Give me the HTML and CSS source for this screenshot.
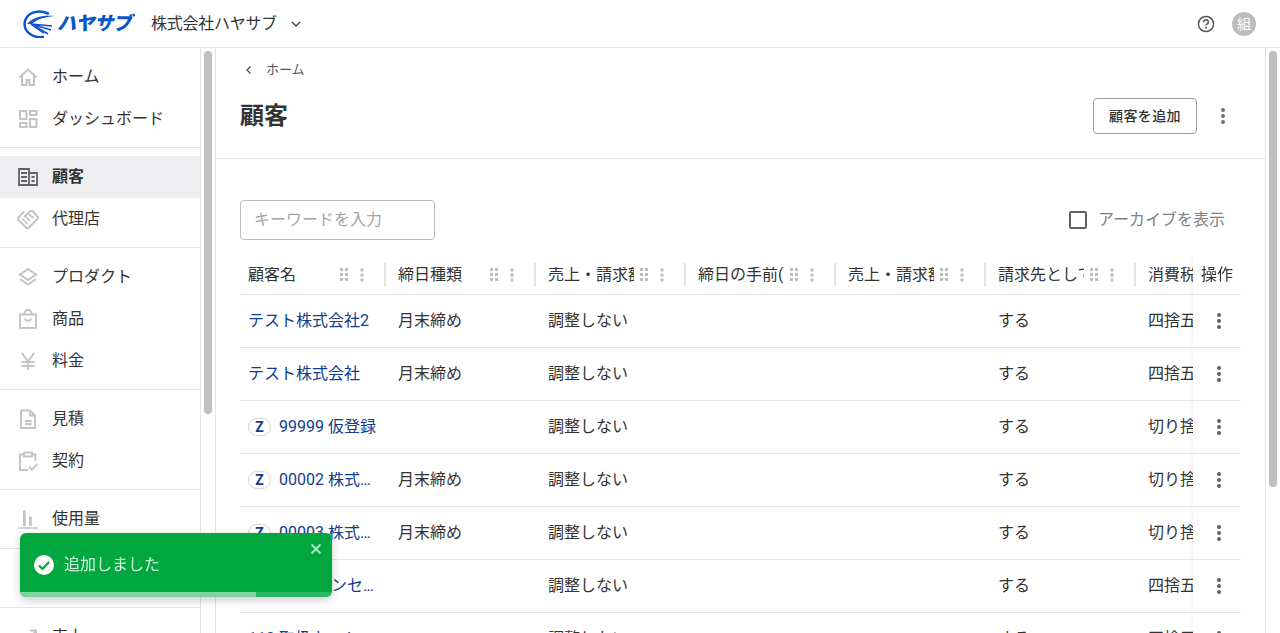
FILE: index.html
```html
<!DOCTYPE html>
<html lang="ja">
<head>
<meta charset="utf-8">
<title>顧客</title>
<link rel="stylesheet" href="styles.css">
</head>
<body>
<header class="topbar">
  <a class="logo">
    <svg class="logo-mark" width="32" height="28" viewBox="0 0 32 28"><path d="M25 3.500C17 0 8 1.500 4 7C0 12 1 20 7 24C11 27 15 27.500 20 27" fill="none" stroke="#0b55c9" stroke-width="2.500" stroke-linecap="round"/><path d="M4 14C10 7 20 5 31 6C22 7 14 9 9 14z" fill="#0b55c9"/><path d="M8 14L29 16M8 14L28 20M8 14L25 24M8 14L21 23" fill="none" stroke="#0b55c9" stroke-width="1.700"/></svg>
    <span class="logo-text">ハヤサブ</span>
  </a>
  <span class="company">株式会社ハヤサブ</span>
  <svg class="chev" width="12" height="12" viewBox="0 0 12 12"><path d="M2 4l4 4 4-4" fill="none" stroke="#444" stroke-width="1.500"/></svg>
  <span class="spacer"></span>
  <svg class="help" width="20" height="20" viewBox="0 0 20 20"><circle cx="10" cy="10" r="7.600" fill="none" stroke="#555" stroke-width="1.500"/><path d="M7.600 8.200A2.400 2.400 0 0 1 12.400 8c0 1.700-2.400 1.900-2.400 3.600" fill="none" stroke="#555" stroke-width="1.500"/><circle cx="10" cy="13.800" r=".95" fill="#555"/></svg>
  <span class="avatar">組</span>
</header>
<div class="body">
  <nav class="sidenav">
    <section class="nav-group">
      <a class="nav-item"><svg class="ni" viewBox="0 0 20 20"><path d="M1.500 10.500L10 2.500l8.500 8M4 9v9h4.500v-5h3v5H16V9" fill="none" stroke="currentColor" stroke-width="2"/></svg>ホーム</a>
      <a class="nav-item"><svg class="ni" viewBox="0 0 20 20"><path d="M2 2h6.500v8H2zM12 2h6.500v4H12zM12 10h6.500v8H12zM2 14h6.500v4H2z" fill="none" stroke="currentColor" stroke-width="2"/></svg>ダッシュボード</a>
    </section>
    <section class="nav-group">
      <a class="nav-item active"><svg class="ni" viewBox="0 0 20 20"><path d="M1 2h10v16H1zM11 6h8v12h-8zM3 6h6M3 10h6M3 14h6M13.500 10h3M13.500 14h3" fill="none" stroke="currentColor" stroke-width="1.800"/></svg>顧客</a>
      <a class="nav-item"><svg class="ni wide" viewBox="0 0 22 20"><path d="M7 2.500L1.500 8.500a2 2 0 0 0 0 2.500L9 18.500a2 2 0 0 0 3 0L20.500 10a2 2 0 0 0 0-2.500L16 2.500a2 2 0 0 0-3 0L7 8" fill="none" stroke="currentColor" stroke-width="2"/><path d="M5 9.500l5.500 5.500M8 7l5 5.500M11.500 5l5 4" fill="none" stroke="currentColor" stroke-width="1.700"/></svg>代理店</a>
    </section>
    <section class="nav-group">
      <a class="nav-item"><svg class="ni" viewBox="0 0 20 20"><path d="M10 2l8 5.500-8 5.500-8-5.500zM2 12L10 17.500l8-5.500" fill="none" stroke="currentColor" stroke-width="2"/></svg>プロダクト</a>
      <a class="nav-item"><svg class="ni" viewBox="0 0 20 20"><path d="M2 5.500h16V19H2zM6.500 5.500V4.500a3.500 3.500 0 0 1 7 0v1M6.500 9.500a3.800 3.800 0 0 0 7 0" fill="none" stroke="currentColor" stroke-width="1.900" stroke-linejoin="round"/></svg>商品</a>
      <a class="nav-item"><svg class="ni" viewBox="0 0 20 20"><path d="M4 2l6 8.500L16 2M10 10.500V19M3.500 11h13M3.500 15h13" fill="none" stroke="currentColor" stroke-width="2"/></svg>料金</a>
    </section>
    <section class="nav-group">
      <a class="nav-item"><svg class="ni" viewBox="0 0 20 20"><path d="M3 1.500h9l5 5V19H3zM12 1.500v5h5M7 12h6.500M7 15h6.500" fill="none" stroke="currentColor" stroke-width="1.900" stroke-linejoin="round"/></svg>見積</a>
      <a class="nav-item"><svg class="ni" viewBox="0 0 20 20"><path d="M6 3.500H2V19h8M14 3.500h3.500v6.500M6 1.500h8v4H6zM11 15.500l3 3 5.500-5.500" fill="none" stroke="currentColor" stroke-width="1.900"/></svg>契約</a>
    </section>
    <section class="nav-group tall">
      <a class="nav-item"><svg class="ni" viewBox="0 0 20 20"><path d="M0 19h20" fill="none" stroke="currentColor" stroke-width="1.500"/><path d="M5 1.500h2.800V17H5zM11 7.500h2.800V17H11z" fill="currentColor"/></svg>使用量</a>
    </section>
    <section class="nav-group tall">
      <a class="nav-item"><svg class="ni" viewBox="0 0 20 20"><path d="M3 3h14v14H3z" fill="none" stroke="currentColor" stroke-width="2"/></svg>請求</a>
    </section>
    <section class="nav-group">
      <a class="nav-item"><svg class="ni" viewBox="0 0 20 20"><path d="M1 16l5-5 4 3 7-9M12 3.500h6V10" fill="none" stroke="currentColor" stroke-width="2"/></svg>売上</a>
    </section>
  </nav>
  <div class="sb sb-nav"><div class="thumb thumb-nav"></div></div>
  <main class="main">
    <div class="page-head">
      <a class="crumb"><svg width="10" height="10" viewBox="0 0 10 10"><path d="M6.500 1.500L3 5l3.500 3.500" fill="none" stroke="#555" stroke-width="1.300"/></svg><span>ホーム</span></a>
      <div class="title-row">
        <h1>顧客</h1>
        <button class="btn">顧客を追加</button>
        <svg class="kebab-lg" width="6" height="18" viewBox="0 0 6 18"><circle cx="3" cy="3" r="2" fill="#757575"/><circle cx="3" cy="9" r="2" fill="#757575"/><circle cx="3" cy="15" r="2" fill="#757575"/></svg>
      </div>
    </div>
    <div class="content">
      <div class="toolbar">
        <input class="search" placeholder="キーワードを入力">
        <label class="archive"><span class="check"></span>アーカイブを表示</label>
      </div>
      <div class="table-wrap">
        <table class="grid">
          <thead>
            <tr>
              <th><div class="hd"><span class="hl">顧客名</span><svg class="grip" viewBox="0 0 9 14"><use href="#g"/></svg><svg class="kb" viewBox="0 0 4 14"><use href="#k"/></svg></div></th>
              <th><div class="hd"><span class="hl">締日種類</span><svg class="grip" viewBox="0 0 9 14"><use href="#g"/></svg><svg class="kb" viewBox="0 0 4 14"><use href="#k"/></svg></div></th>
              <th><div class="hd"><span class="hl">売上・請求額の</span><svg class="grip" viewBox="0 0 9 14"><use href="#g"/></svg><svg class="kb" viewBox="0 0 4 14"><use href="#k"/></svg></div></th>
              <th><div class="hd"><span class="hl">締日の手前(</span><svg class="grip" viewBox="0 0 9 14"><use href="#g"/></svg><svg class="kb" viewBox="0 0 4 14"><use href="#k"/></svg></div></th>
              <th><div class="hd"><span class="hl">売上・請求額の</span><svg class="grip" viewBox="0 0 9 14"><use href="#g"/></svg><svg class="kb" viewBox="0 0 4 14"><use href="#k"/></svg></div></th>
              <th><div class="hd"><span class="hl">請求先として</span><svg class="grip" viewBox="0 0 9 14"><use href="#g"/></svg><svg class="kb" viewBox="0 0 4 14"><use href="#k"/></svg></div></th>
              <th><div class="hd"><span class="hl">消費税の端数</span></div></th>
              <th class="ops">操作</th>
            </tr>
          </thead>
          <tbody>
            <tr><td><a class="lnk">テスト株式会社2</a></td><td>月末締め</td><td>調整しない</td><td></td><td></td><td>する</td><td>四捨五入</td><td class="ops"><svg class="kebab" width="6" height="18" viewBox="0 0 6 18"><use href="#k2"/></svg></td></tr>
            <tr><td><a class="lnk">テスト株式会社</a></td><td>月末締め</td><td>調整しない</td><td></td><td></td><td>する</td><td>四捨五入</td><td class="ops"><svg class="kebab" width="6" height="18" viewBox="0 0 6 18"><use href="#k2"/></svg></td></tr>
            <tr><td><div class="name"><span class="z">Z</span><a class="lnk">99999 仮登録</a></div></td><td></td><td>調整しない</td><td></td><td></td><td>する</td><td>切り捨て</td><td class="ops"><svg class="kebab" width="6" height="18" viewBox="0 0 6 18"><use href="#k2"/></svg></td></tr>
            <tr><td><div class="name"><span class="z">Z</span><a class="lnk">00002 株式会社サンプル</a></div></td><td>月末締め</td><td>調整しない</td><td></td><td></td><td>する</td><td>切り捨て</td><td class="ops"><svg class="kebab" width="6" height="18" viewBox="0 0 6 18"><use href="#k2"/></svg></td></tr>
            <tr><td><div class="name"><span class="z">Z</span><a class="lnk">00003 株式会社サンプル</a></div></td><td>月末締め</td><td>調整しない</td><td></td><td></td><td>する</td><td>切り捨て</td><td class="ops"><svg class="kebab" width="6" height="18" viewBox="0 0 6 18"><use href="#k2"/></svg></td></tr>
            <tr><td><div class="name"><span class="z">Z</span><a class="lnk">仮 キャンセル株式会社</a></div></td><td></td><td>調整しない</td><td></td><td></td><td>する</td><td>四捨五入</td><td class="ops"><svg class="kebab" width="6" height="18" viewBox="0 0 6 18"><use href="#k2"/></svg></td></tr>
            <tr><td><a class="lnk">112 取扱カート</a></td><td></td><td>調整しない</td><td></td><td></td><td>する</td><td>四捨五入</td><td class="ops"><svg class="kebab" width="6" height="18" viewBox="0 0 6 18"><use href="#k2"/></svg></td></tr>
          </tbody>
        </table>
      </div>
    </div>
  </main>
  <div class="sb sb-main"><div class="thumb thumb-main"></div></div>
</div>
<div class="toast">
  <svg class="toast-ok" width="20" height="20" viewBox="0 0 20 20"><circle cx="10" cy="10" r="10" fill="#fff"/><path d="M5 10.500l3.500 3.500 6.500-7" fill="none" stroke="#00a83f" stroke-width="2.200"/></svg>
  <span class="toast-msg">追加しました</span>
  <svg class="toast-x" width="12" height="12" viewBox="0 0 12 12"><path d="M1.500 1.500l9 9M10.500 1.500l-9 9" stroke="#b5e6c7" stroke-width="1.800"/></svg>
  <div class="toast-bar"><div class="toast-fill"></div></div>
</div>
<svg class="defs" width="0" height="0">
  <defs>
    <g id="g" fill="#bdbdbd"><rect x="0" y="0" width="3" height="3"/><rect x="5" y="0" width="3" height="3"/><rect x="0" y="5" width="3" height="3"/><rect x="5" y="5" width="3" height="3"/><rect x="0" y="10" width="3" height="3"/><rect x="5" y="10" width="3" height="3"/></g>
    <g id="k" fill="#bdbdbd"><circle cx="2" cy="2" r="1.700"/><circle cx="2" cy="7" r="1.700"/><circle cx="2" cy="12" r="1.700"/></g>
    <g id="k2" fill="#616161"><circle cx="3" cy="3" r="2"/><circle cx="3" cy="9" r="2"/><circle cx="3" cy="15" r="2"/></g>
  </defs>
</svg>
</body>
</html>
```
FILE: styles.css
```css
* { box-sizing: border-box; }
html, body { margin: 0; height: 100%; overflow: hidden; }
body {
  font-family: Roboto, "Noto Sans CJK JP", sans-serif;
  font-size: 16px;
  line-height: 1;
  color: #333;
  background: #fff;
  display: flex;
  flex-direction: column;
}
.defs { display: block; height: 0; }
.topbar {
  height: 48px;
  flex: none;
  display: flex;
  align-items: center;
  padding: 0 24px 0 23px;
  border-bottom: 1px solid #e4e4e4;
}
.logo { display: flex; align-items: center; width: 128px; color: #0b55c9; }
.logo-mark { flex: none; margin-right: 2px; }
.logo-text {
  font-size: 19px;
  font-weight: 900;
  font-style: italic;
  letter-spacing: -.4px;
  white-space: nowrap;
}
.company { font-size: 16px; color: #333; letter-spacing: -.25px; }
.chev { margin-left: 13px; }
.spacer { flex: 1; }
.help { margin-right: 16px; }
.avatar {
  width: 24px; height: 24px;
  border-radius: 50%;
  background: #bdbdbd;
  color: #fff;
  font-size: 14px;
  display: flex; align-items: center; justify-content: center;
}
.body { flex: 1; min-height: 0; display: flex; }
.sidenav {
  width: 201px;
  flex: none;
  overflow: hidden;
  border-right: 1px solid #e4e4e4;
}
.sb { width: 15px; flex: none; padding: 3px 3px 0; }
.sb-nav { border-right: 1px solid #e4e4e4; padding-right: 2px; }
.sb-main { border-left: 1px solid #e4e4e4; padding-right: 3px; width: 15px; }
.thumb { width: 8px; background: #bfbfbf; border-radius: 4px; }
.thumb-nav { height: 363px; }
.thumb-main { height: 436px; }
.nav-group { padding: 8px 0 7px; border-bottom: 1px solid #e4e4e4; }
.nav-group.tall { padding-bottom: 8px; }
.nav-item {
  height: 42px;
  display: flex;
  align-items: center;
  gap: 14px;
  padding-left: 18px;
  color: #333;
}
.ni { width: 20px; height: 20px; flex: none; color: #c4c4c4; }
.ni.wide { width: 22px; margin: 0 -1px; }
.nav-item.active { background: #eeeef0; font-weight: 700; }
.nav-item.active .ni { color: #5f6368; }
.main { flex: 1; min-width: 0; overflow: hidden; }
.page-head {
  height: 111px;
  border-bottom: 1px solid #e4e4e4;
  padding: 0 24px;
}
.crumb {
  height: 43px;
  display: flex;
  align-items: center;
  font-size: 13px;
  color: #555;
  gap: 12px;
  padding-left: 4px;
}
.title-row { display: flex; align-items: center; height: 50px; }
h1 { margin: 0; font-size: 24px; font-weight: 700; flex: 1; color: #333; }
.btn {
  width: 104px;
  height: 36px;
  background: #fff;
  border: 1px solid #9e9e9e;
  border-radius: 4px;
  font: inherit;
  font-size: 14px;
  letter-spacing: .4px;
  color: #333;
  padding: 0;
  font-weight: 500;
}
.kebab-lg { margin: 0 15px 0 23px; }
.content { padding: 41px 24px 0; }
.toolbar { display: flex; align-items: center; justify-content: space-between; height: 40px; padding-right: 16px; }
.search {
  width: 195px;
  height: 40px;
  border: 1px solid #bdbdbd;
  border-radius: 4px;
  padding: 0 13px 2px;
  font: inherit;
  font-size: 16px;
  outline: 0;
}
.search::placeholder { color: #a5a5a5; opacity: 1; }
.archive { display: flex; align-items: center; gap: 11px; color: #808080; }
.check { width: 18px; height: 18px; border: 2px solid #616161; border-radius: 2px; }
.table-wrap { width: 1001px; margin-top: 16px; overflow: hidden; }
.grid { table-layout: fixed; border-collapse: separate; border-spacing: 0; width: 1098px; }
.grid th, .grid td {
  width: 150px;
  padding: 0 8px;
  text-align: left;
  font-weight: 400;
  border-bottom: 1px solid #e4e4e4;
  white-space: nowrap;
  overflow: hidden;
}
.grid th { height: 39px; }
.grid td { height: 53px; }
.grid th.ops, .grid td.ops {
  width: 48px;
  position: sticky;
  right: 0;
  background: #fff;
  box-shadow: -3px 0 4px -2px rgba(0,0,0,.08);
  overflow: visible;
  clip-path: inset(0 0 0 -8px);
}
.grid td.ops { padding: 0 0 0 4px; }
.kebab { display: block; margin: 0 auto; }
.hd { display: flex; align-items: center; height: 38px; margin-right: -8px; }
.hd::after {
  content: "";
  width: 2px;
  height: 24px;
  margin-left: auto;
  margin-right: 4px;
  background: #e4e4e4;
}
.hl { width: 86px; overflow: hidden; flex: none; margin-right: 6px; }
.grip { width: 9px; height: 14px; flex: none; margin-right: 11px; }
.kb { width: 4px; height: 14px; flex: none; }
.lnk { color: #0f3d8c; }
.name { display: flex; align-items: center; gap: 8px; }
.name .lnk { width: 103px; overflow: hidden; text-overflow: ellipsis; flex: none; }
.z {
  width: 23px;
  height: 18px;
  border: 1px solid #d6d6d6;
  border-radius: 9px;
  font-size: 14px;
  font-weight: 700;
  color: #0f3d8c;
  display: flex; align-items: center; justify-content: center;
  flex: none;
}
.toast {
  position: absolute;
  left: 20px;
  top: 533px;
  width: 312px;
  height: 64px;
  border-radius: 6px;
  background: #00a83f;
  box-shadow: 0 3px 10px rgba(0,0,0,.2);
  overflow: hidden;
  display: flex;
  align-items: center;
  padding: 0 14px;
  color: #d4f1df;
}
.toast-ok { flex: none; margin-right: 10px; }
.toast-msg { flex: 1; }
.toast-x { position: absolute; right: 10px; top: 10px; }
.toast-bar { position: absolute; left: 0; right: 0; bottom: 0; height: 5px; background: #2eb563; }
.toast-fill { width: 236px; height: 5px; background: #80d4a0; }
```
